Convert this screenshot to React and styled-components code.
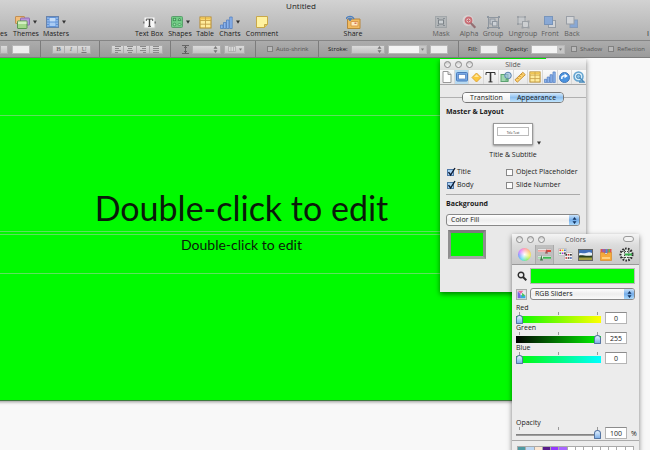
import React, { useState } from "react";
import styled, { createGlobalStyle, css } from "styled-components";

const swatches = ["#4f9aa3", "#bcd8f5", "#fbe6d2", "#561a8b", "#9437ff", "#a865ff", "#fff", "#fff", "#fff", "#fff", "#fff", "#fff", "#fff", "#fff"];

const channels = [
  { name: "Red", value: 0, track: "linear-gradient(90deg, #00f900, #ffff00)" },
  { name: "Green", value: 255, track: "linear-gradient(90deg, #000, #00f900)" },
  { name: "Blue", value: 0, track: "linear-gradient(90deg, #00f900, #00ffff)" },
];

export default function App() {
  return (
    <Page>
      <GlobalStyle />
      <Toolbar />
      <FormatBar />
      <Workspace>
        <Slide>
          <TitleBox>Double-click to edit</TitleBox>
          <SubtitleBox>Double-click to edit</SubtitleBox>
        </Slide>
        <Inspector />
        <Colors />
      </Workspace>
    </Page>
  );
}

function Toolbar() {
  return (
    <StyledToolbar>
      <WindowTitle>Untitled</WindowTitle>
      <Tools>
        <Tool name="es" label="Styles" width={11} start />
        <Tool name="Themes" width={30} icon={<ThemesIcon />} caret />
        <Tool name="Masters" width={30} icon={<MastersIcon />} caret />
        <Gap $width={62} />
        <Tool name="Text Box" width={32} icon={<TextBoxIcon />} />
        <Tool name="Shapes" width={30} icon={<ShapesIcon />} caret />
        <Tool name="Table" width={20} icon={<TableIcon />} />
        <Tool name="Charts" width={30} icon={<ChartIcon />} caret />
        <Tool name="Comment" width={34} icon={<NoteIcon />} />
        <Gap $width={62} />
        <Tool name="Share" width={24} icon={<ShareIcon />} />
        <Gap $width={60} />
        <Tool name="Mask" width={32} icon={<MaskIcon />} dim />
        <Tool name="Alpha" width={24} icon={<AlphaIcon />} dim />
        <Tool name="Group" width={24} icon={<GroupIcon />} dim />
        <Tool name="Ungroup" width={36} icon={<UngroupIcon />} dim />
        <Tool name="Front" width={18} icon={<FrontIcon />} dim />
        <Tool name="Back" width={26} icon={<BackIcon />} dim />
        <Spacer />
        <Tool name="I" label="Inspector" width={3} start />
      </Tools>
    </StyledToolbar>
  );
}

function Tool(props) {
  const { name, label, width, icon, caret, dim, start } = props;

  return (
    <ToolButton $width={width} $dim={dim} $start={start} aria-label={label}>
      <ToolIcon>
        {icon}
        {caret && <Caret />}
      </ToolIcon>
      <ToolLabel>{name}</ToolLabel>
    </ToolButton>
  );
}

function FormatBar() {
  return (
    <StyledFormatBar>
      <Section $width={40} $flush>
        <MiniSelect $width={8} aria-label="Font size" />
        <Well $width={18} aria-label="Text color" />
      </Section>
      <Section $width={59}>
        <Segments>
          <Segment $bold>B</Segment>
          <Segment $italic>I</Segment>
          <Segment $underline>U</Segment>
        </Segments>
      </Section>
      <Section $width={71}>
        <Segments>
          <Segment aria-label="Align left"><LinesIcon ends={[7, 5, 7, 4]} /></Segment>
          <Segment aria-label="Align center"><LinesIcon ends={[7, 6, 7, 6]} starts={[1, 2, 1, 2]} /></Segment>
          <Segment aria-label="Align right"><LinesIcon ends={[7, 7, 7, 7]} starts={[1, 3, 1, 4]} /></Segment>
          <Segment aria-label="Justify"><LinesIcon ends={[7, 7, 7, 7]} /></Segment>
        </Segments>
      </Section>
      <Section $width={85} $gap={3}>
        <SpacingIcon />
        <Stepped width={29} label="Line spacing" />
        <ColumnButton aria-label="Columns"><TinyGrid /><Caret small /></ColumnButton>
      </Section>
      <Section $width={63} $gap={3}>
        <MiniCheck type="checkbox" id="shrink" disabled />
        <MiniLabel htmlFor="shrink" $dim>Auto-shrink</MiniLabel>
      </Section>
      <Section $width={140} $gap={3} $tight>
        <MiniLabel as="span">Stroke:</MiniLabel>
        <Stepped width={34} label="Stroke style" />
        <Well $width={39} $split aria-label="Stroke width"><Caret small /></Well>
        <Well $width={18} aria-label="Stroke color" />
      </Section>
      <Section $grow $gap={3} $tight>
        <MiniLabel as="span">Fill:</MiniLabel>
        <Well $width={18} aria-label="Fill color" />
        <MiniLabel as="span" $push>Opacity:</MiniLabel>
        <Well $width={34} $split aria-label="Opacity"><Caret small /></Well>
        <MiniCheck type="checkbox" id="shadow" disabled $push />
        <MiniLabel htmlFor="shadow" $dim>Shadow</MiniLabel>
        <MiniCheck type="checkbox" id="reflection" disabled $push />
        <MiniLabel htmlFor="reflection" $dim>Reflection</MiniLabel>
      </Section>
    </StyledFormatBar>
  );
}

function Stepped(props) {
  return (
    <SteppedWrap $width={props.width}>
      <select aria-label={props.label} />
      <Arrows color="#777" />
    </SteppedWrap>
  );
}

function Inspector() {
  const [checks, setChecks] = useState({ Title: true, "Object Placeholder": false, Body: true, "Slide Number": false });
  const tabs = [PageIcon, SlideIcon, DiamondIcon, LetterIcon, GraphicIcon, RulerIcon, TableIcon, ChartIcon, LinkIcon, MediaIcon];

  return (
    <InspectorWindow>
      <TitleBar><Lights />Slide</TitleBar>
      <Tabs>
        {tabs.map((Icon, i) => (
          <Tab key={i} $active={i === 1} aria-label={"Inspector " + (i + 1)}>
            <Icon size={12} />
          </Tab>
        ))}
      </Tabs>
      <InspectorBody>
        <PillRow>
          <Pill>
            <PillButton>Transition</PillButton>
            <PillButton $active>Appearance</PillButton>
          </Pill>
        </PillRow>
        <Heading>Master &amp; Layout</Heading>
        <LayoutPicker aria-label="Choose layout">
          <Thumb>
            <ThumbTitle>Title Text</ThumbTitle>
          </Thumb>
          <Caret />
        </LayoutPicker>
        <Caption>Title &amp; Subtitle</Caption>
        <CheckGrid>
          {Object.keys(checks).map((name) => (
            <CheckLabel key={name}>
              <Check
                type="checkbox"
                checked={checks[name]}
                onChange={() => setChecks({ ...checks, [name]: !checks[name] })}
              />
              {checks[name] && <Tick />}
              {name}
            </CheckLabel>
          ))}
        </CheckGrid>
        <Heading>Background</Heading>
        <Popup>
          <select aria-label="Background fill"><option>Color Fill</option></select>
          <Cap><Arrows color="#12335f" /></Cap>
        </Popup>
        <FillWell aria-label="Fill color" />
      </InspectorBody>
    </InspectorWindow>
  );
}

function Colors() {
  return (
    <ColorsWindow>
      <TitleBar><Lights />Colors<Lozenge aria-label="Toggle toolbar" /></TitleBar>
      <Modes>
        <Mode aria-label="Color wheel"><Wheel /></Mode>
        <Mode $active aria-label="Color sliders"><SlidersIcon /></Mode>
        <Mode aria-label="Color palettes"><PalettesIcon /></Mode>
        <Mode aria-label="Image palettes"><PhotoIcon /></Mode>
        <Mode aria-label="Crayons"><CrayonsIcon /></Mode>
        <Mode aria-label="Developer"><PickerIcon /></Mode>
      </Modes>
      <ColorsBody>
        <PickRow>
          <IconButton aria-label="Pick a color"><Magnifier /></IconButton>
          <Sample />
        </PickRow>
        <PickRow>
          <IconButton aria-label="Color profile"><ProfileIcon /></IconButton>
          <Popup>
            <select aria-label="Slider type"><option>RGB Sliders</option></select>
            <Cap><Arrows color="#12335f" /></Cap>
          </Popup>
        </PickRow>
        <Channels>
          {channels.map((c) => (
            <Channel key={c.name} name={c.name} start={c.value} max={255} track={c.track} />
          ))}
        </Channels>
        <Channel name="Opacity" start={100} max={100} unit="%" />
      </ColorsBody>
      <Palette>
        {swatches.map((color, i) => <Swatch key={i} $color={color} />)}
      </Palette>
    </ColorsWindow>
  );
}

function Channel(props) {
  const { name, start, max, track, unit } = props;
  const [value, setValue] = useState(start);

  return (
    <ChannelRow>
      <label htmlFor={name}>{name}</label>
      <SliderCell>
        <Ticks><i /><i /><i /></Ticks>
        <Range
          id={name}
          type="range"
          min="0"
          max={max}
          value={value}
          $track={track}
          onChange={(e) => setValue(Number(e.target.value))}
        />
      </SliderCell>
      <NumberBox
        aria-label={name + " value"}
        value={value}
        onChange={(e) => setValue(Number(e.target.value) || 0)}
      />
      <span>{unit}</span>
    </ChannelRow>
  );
}

function Lights() {
  return (
    <LightRow>
      <Light aria-label="Close" />
      <Light aria-label="Minimize" />
      <Light aria-label="Zoom" />
    </LightRow>
  );
}

/* icons */

function Caret(props) {
  const w = props.small ? 3 : 4;
  return <svg width={w} height={w} viewBox="0 0 4 4"><path d="M0 .5h4L2 3.8z" fill={props.small ? "#777" : "#333"} /></svg>;
}

function Arrows(props) {
  return (
    <svg width="5" height="7" viewBox="0 0 5 7">
      <path d="M.5 2.8 2.5 0l2 2.8zM.5 4.2h4L2.5 7z" fill={props.color} />
    </svg>
  );
}

function Tick() {
  return (
    <TickMark width="9" height="10" viewBox="0 0 9 10">
      <path d="M1.5 5.2 3.6 8 8 1" fill="none" stroke="#0c1c33" strokeWidth="1.4" />
    </TickMark>
  );
}

function ThemesIcon() {
  return (
    <svg width="15" height="13" viewBox="0 0 15 13">
      <rect x=".5" y=".5" width="9" height="7" rx=".5" fill="#f2bd7a" stroke="#c28f52" />
      <rect x="5.5" y="2" width="9" height="7" rx=".5" fill="#b995da" stroke="#8d6db2" />
      <rect x="2.5" y="5" width="9.500" height="7.500" rx=".5" fill="#a5d68c" stroke="#5c9653" />
      <path d="M3 5.500h8.500V8H3z" fill="#d3efc2" />
    </svg>
  );
}

function MastersIcon() {
  return (
    <svg width="13" height="12" viewBox="0 0 13 12">
      <rect x=".5" y=".5" width="12" height="11" fill="#5f92d8" stroke="#6883ab" />
      <path d="M2 1.500v9M11 1.500v9" stroke="#bcd5f3" strokeDasharray="1.500 1" />
      <rect x="3.500" y="2" width="6" height="3.500" fill="#c5dcf7" />
      <rect x="3.500" y="6.500" width="6" height="3.500" fill="#a9cbf3" />
    </svg>
  );
}

function TextBoxIcon() {
  return (
    <svg width="13" height="13" viewBox="0 0 13 13">
      <rect x="1" y="1" width="11" height="11" fill="#f8f8f8" stroke="#c4c4c4" />
      <path d="M3.300 5V3.100h6.400V5M5 10.400h3" fill="none" stroke="#444" strokeWidth=".9" />
      <path d="M6.500 3v7.500" stroke="#444" strokeWidth="1.400" />
      <path d="M0 6.500h1.500M11.500 6.500H13" stroke="#777" strokeWidth="2" />
    </svg>
  );
}

function ShapesIcon() {
  return (
    <svg width="12" height="12" viewBox="0 0 12 12">
      <rect x=".5" y=".5" width="11" height="11" rx="1" fill="#72cc86" stroke="#5a9f6c" />
      <g fill="#9be0aa" stroke="#3d8d53" strokeWidth=".8">
        <rect x="2.300" y="2.300" width="2.400" height="2.400" />
        <path d="m8.500 2 1.500 2.500H7z" />
        <circle cx="3.500" cy="8.500" r="1.300" />
        <path d="m8.500 7 1.500 1.500L8.500 10 7 8.500z" />
      </g>
    </svg>
  );
}

function TableIcon(props) {
  const s = props.size || 13;
  return (
    <svg width={s} height={s} viewBox="0 0 13 13">
      <rect x="1" y="1" width="11" height="11" fill="#ffeb9c" stroke="#b78a2a" />
      <path d="M1.500 2.500h10" stroke="#f0c552" strokeWidth="2" />
      <path d="M6.500 1v11M1 4.500h11M1 8.200h11" stroke="#c79f4a" strokeWidth=".9" />
    </svg>
  );
}

function ChartIcon(props) {
  const s = props.size || 13;
  return (
    <svg width={s} height={s} viewBox="0 0 13 13">
      <g fill="#8bb3ec" stroke="#4c78bd" strokeWidth=".7">
        <path d="M.5 9h2.500v3.500H.5zM3.500 6.500H6v6H3.500zM6.500 4H9v8.500H6.500zM9.700 1h2.500v11.500H9.700z" />
      </g>
    </svg>
  );
}

function NoteIcon() {
  return (
    <svg width="12" height="12" viewBox="0 0 12 12">
      <path d="M.5.5h11v8l-3 3h-8z" fill="#fff2a0" stroke="#c9a84a" />
      <path d="M11.500 8.500h-3v3" fill="#e7ca59" stroke="#c9a84a" />
    </svg>
  );
}

function ShareIcon() {
  return (
    <svg width="15" height="14" viewBox="0 0 15 14">
      <path d="M1.500 4h12.500v9.500H1.500z" fill="#f0bb62" stroke="#b9863d" />
      <path d="M5 6.500h7v4.500H5z" fill="#ffe9bf" stroke="#dc9a4d" />
      <path d="M8.500 7.500h2V9h-2z" fill="#d8745a" />
      <path d="M0 4a4.300 4.300 0 0 1 8 0M2 4.500a2.200 2.200 0 0 1 4 0" fill="none" stroke="#4d7fbd" strokeWidth="1.300" />
      <circle cx="4" cy="5" r="1" fill="#3f73b4" />
    </svg>
  );
}

function MaskIcon() {
  return (
    <svg width="12" height="12" viewBox="0 0 12 12">
      <rect x=".5" y=".5" width="11" height="11" fill="#aab0b4" stroke="#8d9599" />
      <rect x="3.500" y="4" width="5" height="4" fill="#d5dde2" stroke="#4f5a63" />
      <path d="M2 2.500h2M8 2.500h2M2 9.500h2M8 9.500h2" stroke="#657079" />
    </svg>
  );
}

function AlphaIcon() {
  return (
    <svg width="15" height="14" viewBox="0 0 15 14">
      <circle cx="6" cy="5.500" r="5.500" fill="#e6dfdf" />
      <circle cx="6.500" cy="5.500" r="3" fill="#f7d3d3" stroke="#d03440" strokeWidth="1.800" />
      <path d="m8.800 8 4.500 4.700" stroke="#7a3c42" strokeWidth="2.200" />
      <path d="M6.500 4v3M5 5.500h3" stroke="#d03440" />
    </svg>
  );
}

function GroupIcon() {
  return (
    <svg width="13" height="13" viewBox="0 0 13 13">
      <rect x="1.500" y="1.500" width="10" height="10" fill="none" stroke="#6d7b8a" />
      <rect x="3" y="3" width="5" height="5" fill="#c2cbd5" stroke="#6d7b8a" />
      <rect x="5.500" y="5.500" width="4.500" height="4.500" fill="#d8dfe7" stroke="#6d7b8a" />
      <path d="M0 0h2v2H0zM11 0h2v2h-2zM0 11h2v2H0zM11 11h2v2h-2z" fill="#6d7b8a" />
    </svg>
  );
}

function UngroupIcon() {
  return (
    <svg width="13" height="13" viewBox="0 0 13 13">
      <rect x="1" y="1" width="7" height="7" fill="#c9ced3" stroke="#858d95" />
      <rect x="5.500" y="5.500" width="6" height="6" fill="#d8dce0" stroke="#858d95" />
      <path d="M0 0h2v2H0zM7 0h2v2H7zM0 7h2v2H0zM10.500 10.500h2v2h-2zM4.500 10.500h2v2h-2zM10.500 4.500h2v2h-2z" fill="#858d95" />
    </svg>
  );
}

function FrontIcon() {
  return (
    <svg width="12" height="12" viewBox="0 0 12 12">
      <rect x="4.500" y="4.500" width="7" height="7" fill="#dfe2e6" stroke="#7f8894" />
      <rect x=".5" y=".5" width="8" height="8" fill="#669ae4" stroke="#4776b6" />
    </svg>
  );
}

function BackIcon() {
  return (
    <svg width="12" height="12" viewBox="0 0 12 12">
      <rect x="4" y="4" width="7.500" height="7.500" fill="#669ae4" stroke="#6487b8" />
      <rect x=".5" y=".5" width="7.500" height="7.500" fill="#dfe2e6" stroke="#7f8894" />
    </svg>
  );
}

function LinesIcon(props) {
  const { ends, starts = [1, 1, 1, 1] } = props;
  return (
    <svg width="8" height="7" viewBox="0 0 8 7">
      {ends.map((e, i) => <path key={i} d={`M${starts[i]} ${i * 2 + 0.5}H${e}`} stroke="#8a8a8a" />)}
    </svg>
  );
}

function SpacingIcon() {
  return (
    <svg width="7" height="9" viewBox="0 0 7 9">
      <path d="M0 .5h7M0 8.500h7M3.500 1v7M2 3l1.500-1.500L5 3M2 6l1.500 1.500L5 6" fill="none" stroke="#555" strokeWidth=".8" />
    </svg>
  );
}

function TinyGrid() {
  return (
    <svg width="8" height="6" viewBox="0 0 8 6">
      <path d="M.5.5h7v5h-7zM3 .5v5M5.500.5v5" fill="#d8d8d8" stroke="#aaa" strokeWidth=".8" />
    </svg>
  );
}

function PageIcon() {
  return (
    <svg width="10" height="12" viewBox="0 0 10 12">
      <path d="M1 .5h5l3 3v8H1z" fill="#fff" stroke="#999" />
      <path d="M6 .5v3h3" fill="#ddd" stroke="#999" />
    </svg>
  );
}

function SlideIcon() {
  return (
    <svg width="12" height="10" viewBox="0 0 12 10">
      <rect x=".5" y=".5" width="11" height="8.500" rx="1" fill="#78a9e6" stroke="#4c7dbd" />
      <rect x="2.500" y="2.500" width="7" height="4.500" fill="#fff" stroke="#4c7dbd" strokeWidth=".7" />
    </svg>
  );
}

function DiamondIcon() {
  return (
    <svg width="11" height="11" viewBox="0 0 11 11">
      <path d="m5.500 1 4.500 4.500L5.500 10 1 5.500z" fill="#fcc73c" stroke="#e0a63c" strokeLinejoin="round" />
      <path d="m5.500 2.300 2.500 2.700H3z" fill="#ffe79a" />
    </svg>
  );
}

function LetterIcon() {
  return (
    <svg width="11" height="12" viewBox="0 0 11 12">
      <path d="M1 4V1.500h9V4M3.500 10.900h4" fill="none" stroke="#333" />
      <path d="M5.500 1.500v9.500" stroke="#333" strokeWidth="1.600" />
    </svg>
  );
}

function GraphicIcon() {
  return (
    <svg width="12" height="12" viewBox="0 0 12 12">
      <rect x="1" y="3.500" width="7" height="7" fill="#9fd6ae" stroke="#5ca371" />
      <circle cx="8" cy="4.500" r="3.300" fill="#9dbfe0" fillOpacity=".7" stroke="#5d84af" />
      <path d="m5 9.500 2-3 2 3z" fill="#65ab77" />
    </svg>
  );
}

function RulerIcon() {
  return (
    <svg width="12" height="12" viewBox="0 0 12 12">
      <path d="m1 8.800 7.800-7.500 2.500 2.400-8 7.500z" fill="#ffd36e" stroke="#c9943c" />
      <path d="m3.500 7 1 1M5.500 5l1 1M7.500 3.200l1 1" stroke="#a46c19" strokeWidth=".8" />
    </svg>
  );
}

function LinkIcon() {
  return (
    <svg width="11" height="11" viewBox="0 0 11 11">
      <circle cx="5.500" cy="5.500" r="5" fill="#4a93e0" stroke="#4377b8" />
      <path d="M2.800 7V5.800c0-1.400 1.200-2 3-2" fill="none" stroke="#fff" strokeWidth="1.400" />
      <path d="m5.500 1.500 3.300 2.500-3.300 2.300z" fill="#fff" />
    </svg>
  );
}

function MediaIcon() {
  return (
    <svg width="12" height="12" viewBox="0 0 12 12">
      <circle cx="5.500" cy="5.500" r="4.500" fill="#d7ecf8" stroke="#62a3d0" strokeWidth="1.500" />
      <circle cx="5.500" cy="5.500" r="2" fill="#8cc3e6" stroke="#4a8abb" />
      <path d="M6.500 6.500 11 11H6" fill="none" stroke="#4a8abb" strokeWidth="1.400" />
    </svg>
  );
}

function SlidersIcon() {
  return (
    <svg width="15" height="13" viewBox="0 0 15 13">
      <path d="M.5 1h14v3.500H.5z" fill="#fff" stroke="#aaa" strokeWidth=".6" />
      <path d="M1 2h13v1.800H1z" fill="#f0a49f" />
      <path d="M9.500 1.800H14V4H9.500z" fill="#e0453c" />
      <path d="m9.500 1 1.500 4.500H8z" fill="#9a5a57" />
      <path d="M.5 8h14v3.500H.5z" fill="#fff" stroke="#aaa" strokeWidth=".6" />
      <path d="M6 8.800h8v2H6z" fill="#3cb653" />
      <path d="M1 8.800h3v2H1z" fill="#a7dcb1" />
      <path d="M4.500 7 6 12.500H3z" fill="#417c4c" />
    </svg>
  );
}

function PalettesIcon() {
  const dots = ["#e33", "#fb0", "#36c", "#3a5", "#a3c", "#444", "#333", "#c33", "#222", "#c33", "#444", "#35a"];
  return (
    <svg width="15" height="13" viewBox="0 0 15 13">
      <path d="M.5.5h8v7h-8zM6.500 4.500h8v8h-8z" fill="#f5f5f5" stroke="#c5c5c5" />
      {dots.map((c, i) => (
        <rect key={i} x={i < 6 ? 1.5 + (i % 3) * 2.3 : 7.5 + (i % 3) * 2.3} y={i < 6 ? 1.5 + Math.floor(i / 3) * 3 : 6 + Math.floor((i - 6) / 3) * 3.2} width="1.600" height="1.600" fill={c} />
      ))}
    </svg>
  );
}

function PhotoIcon() {
  return (
    <svg width="15" height="12" viewBox="0 0 15 12">
      <rect x=".5" y=".5" width="14" height="11" fill="#3f6fb8" stroke="#666" />
      <path d="M1 4.500c3-1.500 4 .5 7-.5s4-1 6 0V7H1z" fill="#e8f1f8" />
      <path d="M1 6.500c4-1 6 1 13 0V9H1z" fill="#26401e" />
      <path d="M1 8.500h13V11H1z" fill="#a3a043" />
    </svg>
  );
}

function CrayonsIcon() {
  return (
    <svg width="12" height="13" viewBox="0 0 12 13">
      <path d="M.5 1h11v4H.5z" fill="#d9574d" />
      <path d="M2.500 1h2v4h-2z" fill="#8a63c4" />
      <path d="M5.500 1h2v4h-2z" fill="#4f8fd6" />
      <path d="M8.500 1h1.500v4H8.500z" fill="#5fb35a" />
      <path d="M.5 4.500h3L6 7l2.500-2.500h3v8H.5z" fill="#f6a93b" stroke="#d98b2a" strokeWidth=".7" />
      <path d="M2 9h8v2H2z" fill="#ffd07e" />
    </svg>
  );
}

function PickerIcon() {
  return (
    <svg width="15" height="15" viewBox="0 0 15 15">
      <circle cx="7.500" cy="7.500" r="5.500" fill="#e6efe6" />
      <circle cx="7.500" cy="7.500" r="6" fill="none" stroke="#2b2b2b" strokeWidth="2" strokeDasharray="1.600 1.300" />
      <path d="M3 4.500h9M3 10.500h9M5.500 2.500v10M9.800 2.500v10" stroke="#444" strokeDasharray="1.500 1" />
      <path d="M6 6.500h7v2H6z" fill="#35b14b" />
    </svg>
  );
}

function Magnifier() {
  return (
    <svg width="10" height="10" viewBox="0 0 10 10">
      <circle cx="4" cy="4" r="2.800" fill="none" stroke="#2b2b2b" strokeWidth="1.400" />
      <path d="m6 6 3.300 3.300" stroke="#2b2b2b" strokeWidth="2" />
    </svg>
  );
}

function ProfileIcon() {
  return (
    <svg width="11" height="11" viewBox="0 0 10 10">
      <rect x=".5" y=".5" width="9" height="9" fill="#e8e8ee" stroke="#aaa" />
      <path d="M1.500 1.500h5l-2 3z" fill="#e9669f" />
      <path d="M1.500 2v6.500h3L4 4.500z" fill="#7c62e0" />
      <path d="M4.500 8.500h4V6L4 5.500z" fill="#36a9e0" />
      <path d="M5.500 3.500 8.500 6l-3 1z" fill="#4cc25c" />
    </svg>
  );
}

/* styles */

const GlobalStyle = createGlobalStyle`
  * {
    box-sizing: border-box;
  }
  body {
    margin: 0;
    font-family: "Open Sans", "Noto Sans", sans-serif;
    font-size: 7px;
    line-height: 10px;
    color: #1a1a1a;
    overflow: hidden;
  }
  button, input, select {
    font: inherit;
    color: inherit;
    margin: 0;
    padding: 0;
    border: 0;
    background: none;
    border-radius: 0;
  }
  svg {
    display: block;
    flex: none;
  }
`;

const Page = styled.div`
  display: flex;
  flex-direction: column;
  height: 100vh;
`;

const StyledToolbar = styled.header`
  background: linear-gradient(#d2d2d2, #b0b0b0);
  border-bottom: 1px solid #858585;
`;

const WindowTitle = styled.h1`
  margin: 0;
  padding: 1px 0 0;
  text-align: center;
  font-size: 8px;
  font-weight: 400;
  line-height: 10px;
  width: 602px;
  max-width: 100%;
`;

const Tools = styled.div`
  display: flex;
  padding: 4px 0 1px;
`;

const ToolButton = styled.button`
  display: flex;
  flex: none;
  flex-direction: column;
  align-items: ${(p) => (p.$start ? "flex-start" : "center")};
  width: ${(p) => p.$width}px;
  opacity: ${(p) => (p.$dim ? 0.6 : 1)};
`;

const ToolIcon = styled.span`
  display: flex;
  align-items: center;
  justify-content: center;
  gap: 3px;
  height: 14px;
`;

const ToolLabel = styled.span`
  white-space: nowrap;
  line-height: 10px;
`;

const Gap = styled.div`
  flex: none;
  width: ${(p) => p.$width}px;
`;

const Spacer = styled.div`
  flex: 1;
`;

const StyledFormatBar = styled.div`
  display: flex;
  height: 17px;
  background: linear-gradient(#acacac, #9b9b9b);
  border-bottom: 1px solid #7d7d7d;
`;

const Section = styled.div`
  display: flex;
  align-items: center;
  justify-content: flex-start;
  flex: ${(p) => (p.$grow ? "1" : "none")};
  width: ${(p) => p.$width}px;
  padding-left: ${(p) => (p.$flush ? 0 : p.$tight ? 9 : 11)}px;
  gap: ${(p) => p.$gap || 4}px;
  & + & {
    border-left: 1px solid #7c7c7c;
  }
`;

const softButton = css`
  height: 9px;
  background: linear-gradient(#dadada, #c2c2c2);
  border: 1px solid #acacac;
`;

const MiniSelect = styled.button`
  ${softButton}
  width: ${(p) => p.$width}px;
`;

const Well = styled.button`
  display: flex;
  align-items: center;
  justify-content: flex-end;
  flex: none;
  width: ${(p) => p.$width}px;
  height: 9px;
  padding-right: 2px;
  border: 1px solid #b8b8b8;
  background: ${(p) => (p.$split ? "linear-gradient(90deg, #f4f4f4 calc(100% - 7px), #c6c6c6 0)" : "#eee")};
`;

const Segments = styled.div`
  display: flex;
`;

const Segment = styled.button`
  ${softButton}
  display: flex;
  align-items: center;
  justify-content: center;
  width: 13px;
  font-family: "Liberation Serif", serif;
  line-height: 7px;
  color: #777;
  font-weight: ${(p) => (p.$bold ? 700 : 400)};
  font-style: ${(p) => (p.$italic ? "italic" : "normal")};
  text-decoration: ${(p) => (p.$underline ? "underline" : "none")};
  & + & {
    border-left: 0;
  }
`;

const SteppedWrap = styled.div`
  ${softButton}
  display: flex;
  align-items: center;
  flex: none;
  width: ${(p) => p.$width}px;
  padding-right: 2px;
  select {
    appearance: none;
    flex: 1;
    min-width: 0;
    height: 7px;
  }
`;

const ColumnButton = styled.button`
  ${softButton}
  display: flex;
  align-items: center;
  justify-content: center;
  gap: 3px;
  width: 21px;
`;

const MiniCheck = styled.input`
  appearance: none;
  flex: none;
  width: 6px;
  height: 6px;
  border: 1px solid #818181;
  background: #b9b9b9;
  margin-left: ${(p) => (p.$push ? 3 : 0)}px;
`;

const MiniLabel = styled.label`
  font-size: 6px;
  line-height: 9px;
  white-space: nowrap;
  margin-left: ${(p) => (p.$push ? 4 : 0)}px;
  color: ${(p) => (p.$dim ? "#555" : "#1a1a1a")};
`;

const Workspace = styled.main`
  position: relative;
  flex: 1;
  background: #f8f8f8;
  overflow: hidden;
`;

/* the slide is scrolled so that its left edge is out of view */
const Slide = styled.section`
  margin-left: -63px;
  margin-right: 104px;
  padding: 57px 0 126px;
  background: #00fa00;
  border-bottom: 1px solid #3c7a3c;
  box-shadow: 0 1px 3px rgba(0, 0, 0, 0.4);
  color: #0a1a0a;
  font-family: Lato, sans-serif;
  text-align: center;
`;

const TitleBox = styled.div`
  padding-top: 69px;
  border: solid #5fe05f;
  border-width: 1px 0;
  font-size: 34px;
  line-height: 46px;
`;

const SubtitleBox = styled.div`
  margin-top: 2px;
  padding: 1px 0 19px;
  border: solid #5fe05f;
  border-width: 1px 0;
  font-size: 14px;
  line-height: 18px;
`;

const panel = css`
  position: absolute;
  background: #e9e9e9;
  box-shadow: 0 2px 5px rgba(0, 0, 0, 0.5);
`;

const InspectorWindow = styled.aside`
  ${panel}
  top: 1px;
  right: 64px;
  width: 146px;
`;

const ColorsWindow = styled.aside`
  ${panel}
  top: 176px;
  right: 11px;
  width: 127px;
  background: #ececec;
`;

const TitleBar = styled.div`
  display: flex;
  align-items: center;
  justify-content: center;
  position: relative;
  height: 11px;
  background: linear-gradient(#f4f4f4, #dcdcdc);
  color: #555;
`;

const LightRow = styled.div`
  position: absolute;
  left: 4px;
  top: 2px;
  display: flex;
  gap: 4px;
`;

const Light = styled.button`
  width: 7px;
  height: 7px;
  border: 1px solid #8a8a8a;
  border-radius: 50%;
  background: linear-gradient(#ccc, #fafafa);
`;

const Lozenge = styled.button`
  position: absolute;
  right: 5px;
  top: 2px;
  width: 11px;
  height: 6px;
  border: 1px solid #999;
  border-radius: 3px;
  background: #f2f2f2;
`;

const Tabs = styled.nav`
  display: flex;
  height: 15px;
  background: linear-gradient(#fafafa, #e8e8e8);
  border-bottom: 1px solid #a8a8a8;
`;

const Tab = styled.button`
  display: flex;
  flex: 1;
  align-items: center;
  justify-content: center;
  background: ${(p) => (p.$active ? "#b9daf1" : "none")};
  & + & {
    border-left: 1px solid #d8d8d8;
  }
`;

const InspectorBody = styled.div`
  display: flex;
  flex-direction: column;
  padding: 7px 6px 33px;
`;

const PillRow = styled.div`
  display: flex;
  justify-content: center;
  align-items: center;
  margin: 0 -6px 4px;
  &::before, &::after {
    content: "";
    flex: 1;
    border-top: 1px solid #b0b0b0;
  }
`;

const Pill = styled.div`
  display: flex;
  border: 1px solid #777;
  border-radius: 4px;
  overflow: hidden;
`;

const PillButton = styled.button`
  width: ${(p) => (p.$active ? 53 : 47)}px;
  line-height: 9px;
  background: ${(p) => (p.$active ? "linear-gradient(#d5e9fb, #8fc1f0 50%, #c0e4fc)" : "linear-gradient(#fff, #eee)")};
`;

const Heading = styled.h2`
  margin: 0;
  font-size: 7px;
  line-height: 10px;
  font-weight: 700;
`;

const LayoutPicker = styled.button`
  display: flex;
  align-items: flex-end;
  align-self: center;
  gap: 4px;
  margin: 6px 0 0 8px;
`;

const Thumb = styled.span`
  display: block;
  width: 40px;
  height: 22px;
  padding: 3px;
  border: 1px solid #999;
  background: #fff;
  box-shadow: 0 1px 2px rgba(0, 0, 0, 0.4);
`;

const ThumbTitle = styled.span`
  display: block;
  height: 9px;
  padding-top: 4px;
  border: 1px solid #bbb;
  font-size: 3px;
  line-height: 3px;
`;

const Caption = styled.div`
  margin-top: 4px;
  text-align: center;
  line-height: 11px;
`;

const CheckGrid = styled.div`
  display: grid;
  grid-template-columns: 59px 1fr;
  row-gap: 3px;
  margin: 7px 0 4px;
  padding: 0 0 4px 1px;
  border-bottom: 1px solid #aaa;
  & + h2 {
    margin: 0 0 5px;
  }
`;

const CheckLabel = styled.label`
  position: relative;
  display: flex;
  align-items: center;
  gap: 3px;
  white-space: nowrap;
`;

const Check = styled.input`
  appearance: none;
  flex: none;
  width: 7px;
  height: 7px;
  border: 1px solid #888;
  background: #fdfdfd;
  &:checked {
    border-color: #5079a8;
    background: #a9d0f5;
  }
`;

const TickMark = styled.svg`
  position: absolute;
  left: 0;
  top: 0;
  pointer-events: none;
`;

const Popup = styled.div`
  display: flex;
  flex: 1;
  height: 12px;
  border: 1px solid #888;
  border-radius: 3px;
  background: linear-gradient(#fff, #ededed 50%, #fafafa);
  overflow: hidden;
  select {
    appearance: none;
    flex: 1;
    min-width: 0;
    padding-left: 4px;
  }
`;

const Cap = styled.span`
  display: flex;
  align-items: center;
  justify-content: center;
  width: 10px;
  background: linear-gradient(#c9e2fa, #74ade9 50%, #a9d8fb);
`;

const FillWell = styled.button`
  width: 38px;
  height: 29px;
  margin: 4px 0 0 2px;
  border: 3px solid #8f8f8f;
  border-top-color: #7c7c7c;
  border-bottom-color: #a5a5a5;
  background: #00f900;
`;

const Modes = styled.div`
  display: flex;
  justify-content: space-between;
  height: 20px;
  padding: 0 3px;
  background: linear-gradient(#dcdcdc, #c8c8c8);
  border-bottom: 1px solid #999;
`;

const Mode = styled.button`
  display: flex;
  align-items: center;
  justify-content: center;
  width: 19px;
  background: ${(p) => (p.$active ? "#bfbfbf" : "none")};
  border: solid ${(p) => (p.$active ? "#aaa" : "transparent")};
  border-width: 0 1px;
`;

const Wheel = styled.span`
  flex: none;
  width: 13px;
  height: 13px;
  border-radius: 50%;
  background: radial-gradient(#fff, transparent 70%), conic-gradient(#f9a, #fb7, #ee5, #8e6, #5de, #79f, #d7f, #f9a);
`;

const ColorsBody = styled.div`
  display: flex;
  flex-direction: column;
  padding: 3px 4px 2px;
`;

const PickRow = styled.div`
  display: flex;
  align-items: center;
  gap: 3px;
  margin-bottom: 4px;
`;

const IconButton = styled.button`
  display: flex;
  justify-content: center;
  width: 11px;
`;

const Sample = styled.div`
  flex: 1;
  height: 16px;
  border: 1px solid #bbb;
  background: #00f900;
`;

const Channels = styled.div`
  min-height: 115px;
`;

const ChannelRow = styled.div`
  display: grid;
  grid-template-columns: 85px 22px 1fr;
  column-gap: 4px;
  align-items: end;
  height: 20px;
  & > label {
    grid-row: 1;
    grid-column: 1;
    align-self: start;
    line-height: 8px;
  }
`;

const SliderCell = styled.div`
  grid-row: 1;
  grid-column: 1;
`;

const Ticks = styled.div`
  display: flex;
  justify-content: space-between;
  padding: 0 3px;
  i {
    width: 1px;
    height: 3px;
    background: #999;
  }
`;

const Range = styled.input`
  appearance: none;
  display: block;
  width: 100%;
  height: 9px;
  background: ${(p) => p.$track || "linear-gradient(#777, #aaa)"} center / 100% ${(p) => (p.$track ? 7 : 2)}px no-repeat;
  &::-webkit-slider-thumb {
    appearance: none;
    width: 7px;
    height: 9px;
    background: linear-gradient(#e3f1ff, #7fb0e8);
    border: 1px solid #5575a3;
    border-radius: 4px 4px 1px 1px;
  }
`;

const NumberBox = styled.input`
  grid-row: 1;
  grid-column: 2;
  width: 22px;
  height: 12px;
  border: 1px solid #b5b5b5;
  border-top-color: #8c8c8c;
  background: #fff;
  text-align: center;
`;

const Palette = styled.div`
  display: grid;
  grid-template-columns: repeat(14, 1fr);
  gap: 1px;
  position: relative;
  margin: 5px 5px 0;
  padding: 1px;
  background: #aaa;
  &::before {
    content: "";
    position: absolute;
    top: -6px;
    left: -5px;
    right: -5px;
    border-top: 1px solid #aaa;
  }
`;

const Swatch = styled.span`
  height: 7px;
  background: ${(p) => p.$color};
`;
